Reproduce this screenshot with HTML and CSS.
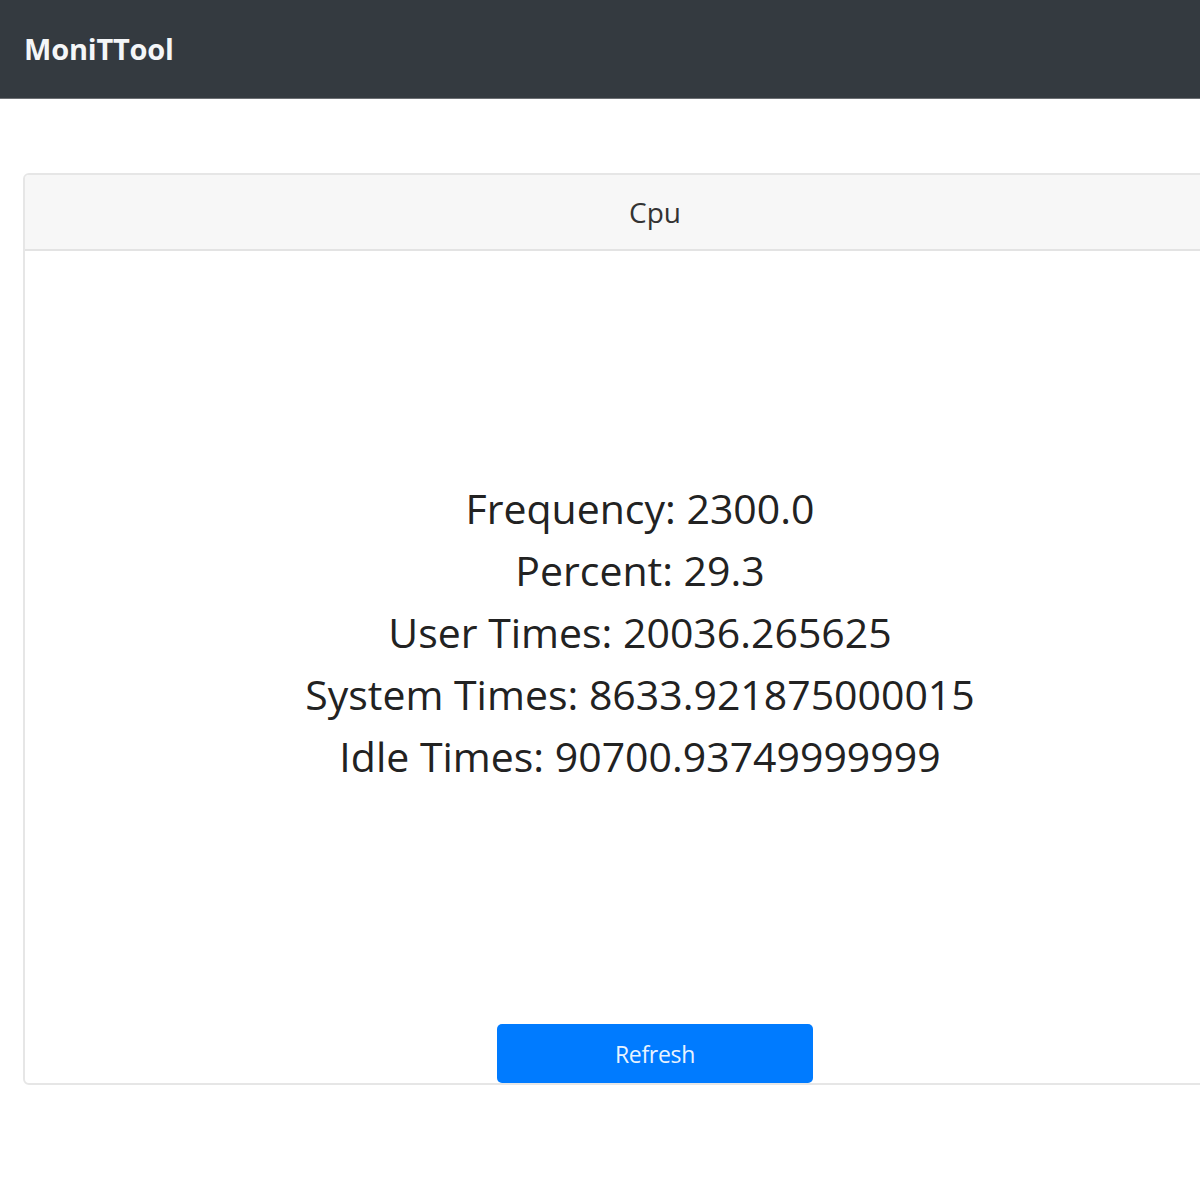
FILE: index.html
```html
<!DOCTYPE html>
<html>
<head>
<meta charset="utf-8">
<link rel="stylesheet" href="styles.css">
</head>
<body>
<nav class="navbar"><span class="brand">MoniTTool</span></nav>
<main class="page">
  <section class="card">
    <header class="card-header">Cpu</header>
    <div class="card-body">
      <div class="stats">
        <div class="stat">Frequency: 2300.0</div>
        <div class="stat">Percent: 29.3</div>
        <div class="stat">User Times: 20036.265625</div>
        <div class="stat">System Times: 8633.921875000015</div>
        <div class="stat">Idle Times: 90700.93749999999</div>
      </div>
      <button class="btn">Refresh</button>
    </div>
  </section>
</main>
</body>
</html>
```
FILE: styles.css
```css
html, body {
  margin: 0;
  padding: 0;
  overflow: hidden;
  background: #ffffff;
  font-family: "Open Sans", "Noto Sans", sans-serif;
  color: #212529;
}
.navbar {
  height: 99px;
  background: #343a40;
  display: flex;
  align-items: center;
  padding-left: 24px;
  padding-bottom: 2px;
  border-bottom: 1px solid #6c6f73;
  box-sizing: border-box;
}
.brand {
  color: #f4f6f8;
  font-weight: 700;
  font-size: 29px;
  letter-spacing: -0.2px;
}
.page {
  padding: 74px 0 0 23px;
  width: 1264px;
}
.card {
  width: 1264px;
  border: 2px solid #e6e6e6;
  border-radius: 6px;
  box-sizing: border-box;
  overflow: hidden;
}
.card-header {
  height: 76px;
  background: #f7f7f7;
  border-bottom: 2px solid #e3e3e3;
  box-sizing: border-box;
  display: flex;
  align-items: center;
  justify-content: center;
  font-size: 28px;
  font-weight: 500;
  color: #333;
}
.card-body {
  height: 832px;
  display: flex;
  flex-direction: column;
  align-items: center;
}
.stats {
  flex: 1;
  display: flex;
  flex-direction: column;
  justify-content: center;
  align-items: center;
  margin-right: 30px;
  padding-bottom: 12px;
}
.stat {
  font-size: 41px;
  font-weight: 500;
  line-height: 62px;
  color: #222;
}
.btn {
  width: 316px;
  height: 59px;
  background: #007bff;
  border: none;
  border-radius: 5px;
  color: #e8f3ff;
  font-family: "Open Sans", "Noto Sans", sans-serif;
  font-size: 23px;
  font-weight: 500;
  letter-spacing: -0.3px;
  margin-bottom: 0;
}
```
